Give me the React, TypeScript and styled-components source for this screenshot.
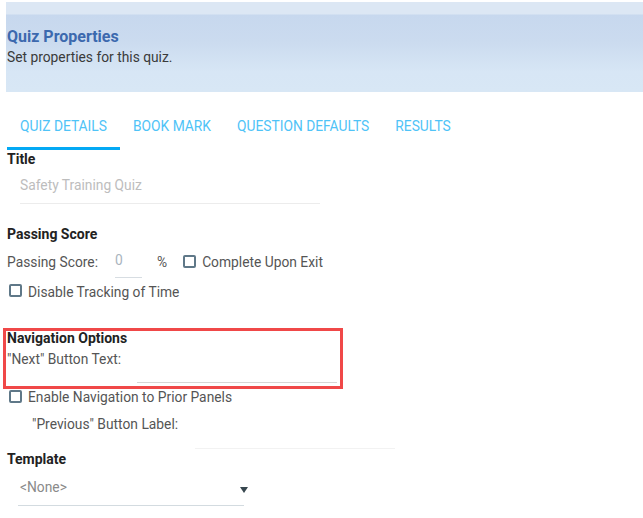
import React, { useState } from 'react';
import styled, { createGlobalStyle } from 'styled-components';

// Global reset and base font
const GlobalStyle = createGlobalStyle`
  body {
    margin: 0;
    background: #ffffff;
    font-family: Roboto, "Liberation Sans", Arial, sans-serif;
  }
`;

const Page = styled.div`
  padding: 2px 0 0 6px;
  width: 637px;
  min-height: 516px;
  background: #ffffff;
`;

const Header = styled.header`
  height: 90px;
  box-sizing: border-box;
  padding: 25px 0 0 1px;
  background: linear-gradient(
    to bottom,
    #dce7f4 0px,
    #dce7f4 12px,
    #c7d8ee 13px,
    #cbdbef 40px,
    #d7e6f5 70px,
    #d8e7f5 100%
  );
`;

const HeaderTitle = styled.h1`
  margin: 0;
  font-size: 16px;
  line-height: 19px;
  font-weight: 700;
  color: #3c69ae;
`;

const HeaderSubtitle = styled.p`
  margin: 3px 0 0;
  font-size: 13.8px;
  line-height: 16px;
  color: #3a3a3a;
`;

const TabBar = styled.nav`
  display: flex;
  margin: 10px 0 0 1px;
  height: 48px;
`;

const Tab = styled.button<{ $active?: boolean }>`
  height: 48px;
  padding: 3px 13px 0;
  border: none;
  background: none;
  font-family: inherit;
  font-size: 13.8px;
  text-transform: uppercase;
  color: #4fc3f7;
  cursor: pointer;
  border-bottom: 3px solid ${p => (p.$active ? '#03a9f4' : 'transparent')};
`;

const Content = styled.div`
  padding-left: 1px;
`;

const SectionLabel = styled.div<{ $gap?: number }>`
  margin-top: ${p => p.$gap ?? 0}px;
  font-size: 14px;
  line-height: 16px;
  font-weight: 700;
  color: #222222;
`;

const TextField = styled.input<{ $width: number; $height: number; $indent?: number; $line?: string }>`
  display: block;
  box-sizing: border-box;
  width: ${p => p.$width}px;
  height: ${p => p.$height}px;
  margin-left: ${p => p.$indent ?? 0}px;
  padding: 0;
  border: none;
  border-bottom: 1px solid ${p => p.$line ?? '#ececec'};
  outline: none;
  background: transparent;
  font-family: inherit;
  font-size: 13.8px;
  color: #555;
  &::placeholder {
    color: #bdbdbd;
  }
`;

const Row = styled.div<{ $height?: number; $align?: string; $indent?: number; $gap?: number }>`
  display: flex;
  align-items: ${p => p.$align ?? 'center'};
  height: ${p => (p.$height ? `${p.$height}px` : 'auto')};
  margin-left: ${p => p.$indent ?? 0}px;
  margin-top: ${p => p.$gap ?? 0}px;
`;

const FieldLabel = styled.span<{ $gapRight?: number }>`
  font-size: 13.8px;
  line-height: 20px;
  color: #555555;
  margin-right: ${p => p.$gapRight ?? 0}px;
  white-space: nowrap;
`;

const ScoreInput = styled(TextField)`
  align-self: flex-start;
  color: #a9b4be;
  &::placeholder {
    color: #a9b4be;
  }
`;

const Percent = styled.span`
  margin: 0 16px 0 15px;
  font-size: 13.8px;
  color: #555;
`;

const CheckLabel = styled.label<{ $indent?: number }>`
  display: inline-flex;
  align-items: center;
  gap: 6px;
  margin-left: ${p => p.$indent ?? 0}px;
  font-size: 13.8px;
  line-height: 16px;
  color: #555555;
  cursor: pointer;
`;

const Box = styled.span<{ $checked: boolean }>`
  display: inline-block;
  box-sizing: border-box;
  width: 13px;
  height: 13px;
  border: 2px solid #5f7888;
  border-radius: 2px;
  background: ${p => (p.$checked ? '#5f7888' : '#fff')};
  margin-top: -2px;
`;

const HiddenInput = styled.input`
  display: none;
`;

const Highlight = styled.div`
  position: relative;
`;

// red annotation frame drawn over the navigation block
const HighlightFrame = styled.div`
  position: absolute;
  left: -4px;
  top: -2px;
  width: 340px;
  height: 61px;
  box-sizing: border-box;
  border: 3px solid #f04848;
  pointer-events: none;
`;

const SelectWrap = styled.div`
  position: relative;
  width: 226px;
  margin-left: 11px;
  height: 39px;
  border-bottom: 1px solid #d3dbe0;
  box-sizing: border-box;
`;

const SelectValue = styled.div`
  padding: 10px 0 0 2px;
  font-size: 13.8px;
  line-height: 20px;
  color: #8a8a8a;
`;

const Caret = styled.span`
  position: absolute;
  right: -4px;
  top: 20px;
  width: 0;
  height: 0;
  border-left: 4px solid transparent;
  border-right: 4px solid transparent;
  border-top: 6px solid #37474f;
`;

const Checkbox: React.FC<{ label: string; indent?: number }> = ({ label, indent }) => {
  const [checked, setChecked] = useState(false);
  return (
    <CheckLabel $indent={indent}>
      <HiddenInput type="checkbox" checked={checked} onChange={() => setChecked(!checked)} />
      <Box $checked={checked} />
      {label}
    </CheckLabel>
  );
};

const tabs = ['Quiz Details', 'Book Mark', 'Question Defaults', 'Results'];

const App: React.FC = () => {
  const [activeTab, setActiveTab] = useState(0);

  return (
    <Page>
      <GlobalStyle />
      <Header>
        <HeaderTitle>Quiz Properties</HeaderTitle>
        <HeaderSubtitle>Set properties for this quiz.</HeaderSubtitle>
      </Header>

      <TabBar>
        {tabs.map((t, i) => (
          <Tab key={t} $active={i === activeTab} onClick={() => setActiveTab(i)}>
            {t}
          </Tab>
        ))}
      </TabBar>

      <Content>
        <SectionLabel $gap={1}>Title</SectionLabel>
        <TextField $width={300} $height={37} $indent={13} placeholder="Safety Training Quiz" />

        <SectionLabel $gap={22}>Passing Score</SectionLabel>
        <Row $height={40}>
          <FieldLabel $gapRight={17}>Passing Score:</FieldLabel>
          <ScoreInput $width={27} $height={36} $line="#d7dde2" placeholder="0" />
          <Percent>%</Percent>
          <Checkbox label="Complete Upon Exit" />
        </Row>
        <Row $height={17} $gap={1}>
          <Checkbox label="Disable Tracking of Time" indent={2} />
        </Row>

        <Highlight>
          <HighlightFrame />
          <SectionLabel $gap={30}>Navigation Options</SectionLabel>
          <Row $align="flex-start" $gap={3}>
            <FieldLabel $gapRight={16}>"Next" Button Text:</FieldLabel>
            <TextField $width={200} $height={34} $line="#d6d6d6" />
          </Row>
        </Highlight>
        <Row $height={16} $gap={6}>
          <Checkbox label="Enable Navigation to Prior Panels" indent={2} />
        </Row>
        <Row $align="flex-start" $indent={25} $gap={9}>
          <FieldLabel $gapRight={17}>"Previous" Button Label:</FieldLabel>
          <TextField $width={200} $height={35} $line="#f2f2f2" />
        </Row>

        <SectionLabel $gap={2}>Template</SectionLabel>
        <SelectWrap>
          <SelectValue>&lt;None&gt;</SelectValue>
          <Caret />
        </SelectWrap>
      </Content>
    </Page>
  );
};

export default App;
